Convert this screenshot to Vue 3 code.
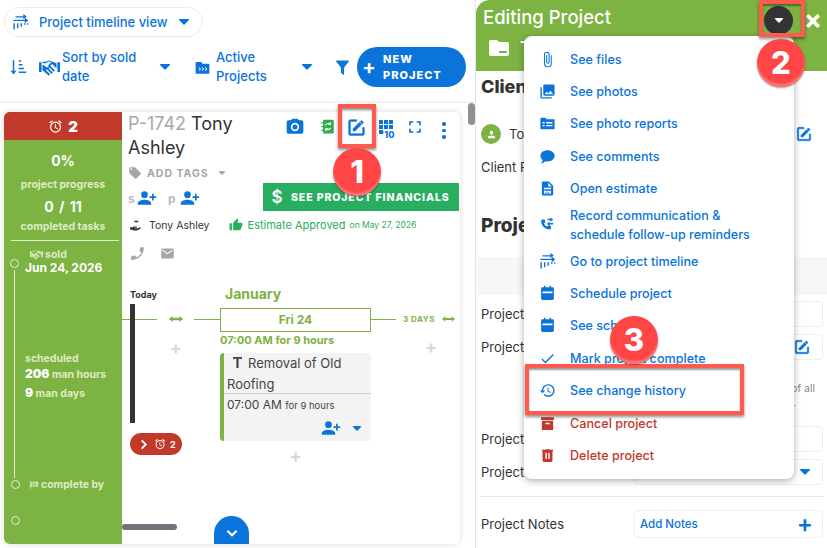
<script setup>
const i = {
  edit: 'M5 3C3.89 3 3 3.9 3 5V19C3 20.1 3.9 21 5 21H19C20.1 21 21 20.1 21 19V12H19V19H5V5H12V3H5M17.78 4C17.61 4 17.43 4.07 17.3 4.2L16.08 5.41L18.58 7.91L19.8 6.7C20.06 6.44 20.06 6 19.8 5.75L18.25 4.2C18.12 4.07 17.95 4 17.78 4M15.37 6.12L8 13.5V16H10.5L17.87 8.62L15.37 6.12Z',
  camera: 'M4,4H7L9,2H15L17,4H20A2,2 0 0,1 22,6V18A2,2 0 0,1 20,20H4A2,2 0 0,1 2,18V6A2,2 0 0,1 4,4M12,7A5,5 0 0,0 7,12A5,5 0 0,0 12,17A5,5 0 0,0 17,12A5,5 0 0,0 12,7M12,9A3,3 0 0,1 15,12A3,3 0 0,1 12,15A3,3 0 0,1 9,12A3,3 0 0,1 12,9Z',
  addUser: 'M9,14C11.67,14 17,15.33 17,18V20H1V18C1,15.33 6.33,14 9,14M18,10V7H20V10H23V12H20V15H18V12H15V10M9,12A4,4 0 0,1 5,8A4,4 0 0,1 9,4A4,4 0 0,1 13,8A4,4 0 0,1 9,12Z',
  tag: 'M5.5,7A1.5,1.5 0 0,1 4,5.5A1.5,1.5 0 0,1 5.5,4A1.5,1.5 0 0,1 7,5.5A1.5,1.5 0 0,1 5.5,7M21.41,11.58L12.41,2.58C12.05,2.22 11.55,2 11,2H4C2.89,2 2,2.89 2,4V11C2,11.55 2.22,12.05 2.59,12.41L11.58,21.41C11.95,21.77 12.45,22 13,22C13.55,22 14.05,21.77 14.41,21.41L21.41,14.41C21.78,14.05 22,13.55 22,13C22,12.44 21.77,11.94 21.41,11.58Z',
  phone: 'M17.38,10.79C15.94,13.62 13.62,15.94 10.79,17.38L8.59,15.18C8.31,14.9 7.92,14.82 7.57,14.93C6.45,15.3 5.25,15.5 4,15.5A1,1 0 0,0 3,16.5V20A1,1 0 0,0 4,21A17,17 0 0,0 21,4A1,1 0 0,0 20,3H16.5A1,1 0 0,0 15.5,4C15.5,5.25 15.3,6.45 14.93,7.57C14.82,7.92 14.9,8.31 15.18,8.59L17.38,10.79Z',
  email: 'M20,8L12,13L4,8V6L12,11L20,6M20,4H4C2.89,4 2,4.89 2,6V18A2,2 0 0,0 4,20H20A2,2 0 0,0 22,18V6C22,4.89 21.1,4 20,4Z',
  filter: 'M14,12V19.88C14.04,20.18 13.94,20.5 13.71,20.71C13.32,21.1 12.69,21.1 12.3,20.71L10.29,18.7C10.06,18.47 9.96,18.16 10,17.87V12H9.97L4.21,4.62C3.87,4.19 3.95,3.56 4.38,3.22C4.57,3.08 4.78,3 5,3H19C19.22,3 19.43,3.08 19.62,3.22C20.05,3.56 20.13,4.19 19.79,4.62L14.03,12H14Z',
  thumb: 'M23,10C23,8.89 22.1,8 21,8H14.68L15.64,3.43C15.66,3.33 15.67,3.22 15.67,3.11C15.67,2.7 15.5,2.32 15.23,2.05L14.17,1L7.59,7.58C7.22,7.95 7,8.45 7,9V19A2,2 0 0,0 9,21H18C18.83,21 19.54,20.5 19.84,19.78L22.86,12.73C22.95,12.5 23,12.26 23,12V10M1,21H5V9H1V21Z',
  alarm: 'M12,20A7,7 0 0,1 5,13A7,7 0 0,1 12,6A7,7 0 0,1 19,13A7,7 0 0,1 12,20M12,4A9,9 0 0,0 3,13A9,9 0 0,0 12,22A9,9 0 0,0 21,13A9,9 0 0,0 12,4M12.5,8H11V14L15.75,16.85L16.5,15.55L12.5,13.25V8M7.88,3.39L6.6,1.86L2,5.71L3.29,7.24L7.88,3.39M22,5.72L17.4,1.86L16.11,3.39L20.71,7.25L22,5.72Z',
  timeline: 'M2 13h2v9H2zM7 13h2v7H7zM12 13h2v5h-2zM17 13h2v2h-2zM21 13h2v2h-2zM2 8h16V5l5 4-5 4v-3H2zM5 3h11V0l5 3.5L16 7V5H5z',
  sort: 'M5 3h2v14h3l-4 5-4-5h3zM13 3h3v2h-3zM13 8h5v2h-5zM13 13h7v2h-7zM13 18h10v2H13z',
  shake: 'M0 6h3v11H0zM21 6h3v11h-3zM4 7h4l3-2 3 1-4 4 1.5 1.5L15 8l5 5v-6l-5-2-1 0-3-1-3 1.5H4zM4 9v6l7 6 2-1-5-5 1-1 5 5 2-1-5-5 1-1 5 5 1-2-6-6-3 3-4-3z',
  folderGo: 'M2 3h8l2 3h10a1 1 0 0 1 1 1v14a1 1 0 0 1-1 1H2a1 1 0 0 1-1-1V4a1 1 0 0 1 1-1z',
  clip: 'M16.5,6V17.5A4,4 0 0,1 12.5,21.5A4,4 0 0,1 8.5,17.5V5A2.5,2.5 0 0,1 11,2.5A2.5,2.5 0 0,1 13.5,5V15.5A1,1 0 0,1 12.5,16.5A1,1 0 0,1 11.5,15.5V6H10V15.5A2.5,2.5 0 0,0 12.5,18A2.5,2.5 0 0,0 15,15.5V5A4,4 0 0,0 11,1A4,4 0 0,0 7,5V17.5A5.5,5.5 0 0,0 12.5,23A5.5,5.5 0 0,0 18,17.5V6H16.5Z',
  photos: 'M22,16V4A2,2 0 0,0 20,2H8A2,2 0 0,0 6,4V16A2,2 0 0,0 8,18H20A2,2 0 0,0 22,16M11,12L13.03,14.71L16,11L20,16H8M2,6V20A2,2 0 0,0 4,22H18V20H4V6',
  report: 'M2 5a1 1 0 0 1 1-1h6l2 2h10a1 1 0 0 1 1 1v12a1 1 0 0 1-1 1H3a1 1 0 0 1-1-1zM5 10v2h3v-2zM10 10v2h9v-2zM5 14v2h3v-2zM10 14v2h9v-2z',
  comment: 'M12 3c5.5 0 10 3.4 10 8s-4.500 8-10 8c-1 0-2-.1-3-.4C7.500 20 5.500 21.500 3 22c1.200-1.500 2-3.200 2.200-5C3.200 15.500 2 13.400 2 11c0-4.600 4.500-8 10-8z',
  doc: 'M6,2H14L20,8V20A2,2 0 0,1 18,22H6C4.89,22 4,21.1 4,20V4C4,2.89 4.89,2 6,2M13,4V9H18L13,4M7,11V13H17V11H7M7,15V19H17V15H7M9,16.500H15V17.500H9Z',
  comm: 'M5 5h3l1 4-2 1.500c.9 2 2.500 3.600 4.500 4.500L13 13l4 1v3c0 1-1 2-2 2C8.500 19 3 13.500 3 7c0-1 1-2 2-2zM16 2l4 3-4 3V6h-4V4h4zM15 8l-4 3 4 3v-2h5v-2h-5z',
  calendar: 'M7 1h2v2h6V1h2v2h2a2 2 0 0 1 2 2v14a2 2 0 0 1-2 2H5a2 2 0 0 1-2-2V5a2 2 0 0 1 2-2h2zM5 9v2.500h14V9z',
  check: 'M21,7L9,19L3.5,13.5L4.91,12.09L9,16.17L19.59,5.59L21,7Z',
  history: 'M13.5,8H12V13L16.28,15.54L17,14.33L13.5,12.25V8M13,3A9,9 0 0,0 4,12H1L4.96,16.03L9,12H6A7,7 0 0,1 13,5A7,7 0 0,1 20,12A7,7 0 0,1 13,19C11.07,19 9.32,18.21 8.06,16.94L6.64,18.36C8.27,20 10.5,21 13,21A9,9 0 0,0 22,12A9,9 0 0,0 13,3',
  archive: 'M3,3H21V7H3V3M4,8H20V21H4V8M9.5,11A0.5,0.5 0 0,0 9,11.5V13H15V11.5A0.5,0.5 0 0,0 14.5,11H9.5Z',
  trash: 'M9,3V4H4V6H5V19A2,2 0 0,0 7,21H17A2,2 0 0,0 19,19V6H20V4H15V3H9M9,8H11V17H9V8M13,8H15V17H13V8Z',
  account: 'M12,4A4,4 0 0,1 16,8A4,4 0 0,1 12,12A4,4 0 0,1 8,8A4,4 0 0,1 12,4M12,14C16.42,14 20,15.79 20,18V20H4V18C4,15.79 7.58,14 12,14Z',
  folder: 'M10,4H4C2.89,4 2,4.89 2,6V18A2,2 0 0,0 4,20H20A2,2 0 0,0 22,18V8C22,6.89 21.1,6 20,6H12L10,4ZM12 15v2h8v-2z',
  full: 'M5,5H10V7H7V10H5V5M14,5H19V10H17V7H14V5M17,14H19V19H14V17H17V14M10,17V19H5V14H7V17H10Z',
  hammer: 'M4 2h16v4h-2V5h-4v17h-4V5H6v1H4z',
  hand: 'M10 3h7v3h-7zM2 15h4l3-1h5l1 2h-5v1h6l5-2 1 2-7 4H8l-2-1H2z',
  flag: 'M2 3h2v18H2zM5 4h17v12H5zM7 6v3h3V6zM13 6v3h3V6zM10 9v3h3V9zM16 9v3h3V9zM7 12v3h3v-3zM13 12v3h3v-3z',
  both: 'M0 6l6-5v3h12V1l6 5-6 5V8H6v3z'
}
const menu = [
  { label: 'See files', icon: i.clip },
  { label: 'See photos', icon: i.photos },
  { label: 'See photo reports', icon: i.report },
  { label: 'See comments', icon: i.comment },
  { label: 'Open estimate', icon: i.doc },
  { label: 'Record communication & schedule follow-up reminders', icon: i.comm, tall: true },
  { label: 'Go to project timeline', icon: i.timeline },
  { label: 'Schedule project', icon: i.calendar },
  { label: 'See schedule', icon: i.calendar },
  { label: 'Mark project complete', icon: i.check },
  { label: 'See change history', icon: i.history },
  { label: 'Cancel project', icon: i.archive, danger: true },
  { label: 'Delete project', icon: i.trash, danger: true }
]
</script>

<template>
  <div class="page">
    <section class="main">
      <div class="pill">
        <svg class="ic ic-timeline" viewBox="0 0 24 24"><path :d="i.timeline" /></svg>
        <span>Project timeline view</span>
        <i class="caret"></i>
      </div>

      <div class="toolbar">
        <svg class="ic ic-sort" viewBox="0 0 24 24"><path :d="i.sort" /></svg>
        <svg class="ic ic-shake" viewBox="0 0 24 24"><path :d="i.shake" /></svg>
        <span class="tb-label sort-label">Sort by sold date</span>
        <i class="caret caret-a"></i>
        <svg class="ic ic-go" viewBox="0 0 24 24"><path :d="i.folderGo" /><path class="go" d="M6 12l3 2.500-3 2.500M11 12l3 2.500-3 2.500M16 12l3 2.500-3 2.500" /></svg>
        <span class="tb-label active-label">Active Projects</span>
        <i class="caret caret-b"></i>
        <svg class="ic ic-filter" viewBox="0 0 24 24"><path :d="i.filter" /></svg>
        <button class="new-btn"><b class="plus">+</b><span>NEW PROJECT</span></button>
      </div>

      <div class="content">
        <article class="card">
          <aside class="side">
            <div class="side-alert">
              <svg class="ic ic-alarm" viewBox="0 0 24 24"><path :d="i.alarm" /></svg>
              <b>2</b>
            </div>
            <div class="side-pct">0%</div>
            <div class="side-cap cap-1">project progress</div>
            <div class="side-count">0 / 11</div>
            <div class="side-cap cap-2">completed tasks</div>
            <hr class="side-hr" />
            <div class="track">
              <i class="dot dot-1"></i>
              <div class="t-sold">
                <svg class="ic ic-mini" viewBox="0 0 24 24"><path :d="i.shake" /></svg> sold
              </div>
              <div class="t-date">Jun 24, 2026</div>
              <div class="t-sched">scheduled</div>
              <div class="t-hours"><b>206</b> man hours</div>
              <div class="t-days"><b>9</b> man days</div>
            </div>
            <div class="t-done">
              <i class="dot"></i>
              <svg class="ic ic-flag" viewBox="0 0 24 24"><path :d="i.flag" fill-rule="evenodd" /></svg>
              <span>complete by</span>
            </div>
            <i class="dot dot-last"></i>
          </aside>

          <div class="body">
            <header class="body-head">
              <h2 class="title"><span class="num">P-1742</span> Tony Ashley</h2>
              <div class="tools">
                <svg class="ic tool" viewBox="0 0 24 24"><path :d="i.camera" /></svg>
                <svg class="tool-note" viewBox="0 0 24 24"><path d="M5 1h15a2 2 0 0 1 2 2v18a2 2 0 0 1-2 2H5z" /><path d="M2 5h5v2H2zM2 11h5v2H2zM2 17h5v2H2z" /><path class="note-sync" d="M9 10a4.500 4.500 0 0 1 7-2M17 14a4.500 4.500 0 0 1-7 2M16.500 5v3.500H13M9.500 19v-3.500H13" /></svg>
                <svg class="ic tool tool-edit" viewBox="0 0 24 24"><path :d="i.edit" /></svg>
                <span class="tool-grid"><i v-for="n in 7" :key="n"></i><em>'10</em></span>
                <svg class="ic tool tool-full" viewBox="0 0 24 24"><path :d="i.full" /></svg>
                <span class="tool-dots"><i></i><i></i><i></i></span>
              </div>
            </header>
            <div class="tags">
              <svg class="ic ic-tag" viewBox="0 0 24 24"><path :d="i.tag" /></svg>
              <span>ADD TAGS</span>
              <i class="caret caret-grey"></i>
            </div>
            <div class="assign">
              <span class="letter">s</span>
              <svg class="ic ic-add" viewBox="0 0 24 24"><path :d="i.addUser" /></svg>
              <span class="letter letter-p">p</span>
              <svg class="ic ic-add" viewBox="0 0 24 24"><path :d="i.addUser" /></svg>
              <button class="fin"><b class="dollar">$</b><span>SEE PROJECT FINANCIALS</span></button>
            </div>
            <div class="owner">
              <svg class="ic ic-hand" viewBox="0 0 24 24"><path :d="i.hand" /></svg>
              <span class="owner-name">Tony Ashley</span>
              <svg class="ic ic-thumb" viewBox="0 0 24 24"><path :d="i.thumb" /></svg>
              <span class="approved">Estimate Approved</span>
              <span class="approved-on">on May 27, 2026</span>
            </div>
            <div class="contact">
              <svg class="ic ic-phone" viewBox="0 0 24 24"><path :d="i.phone" /></svg>
              <svg class="ic ic-mail" viewBox="0 0 24 24"><path :d="i.email" /></svg>
            </div>

            <div class="tl">
              <div class="tl-today">
                <span class="today">Today</span>
                <div class="today-lane">
                  <div class="tl-line">
                    <i class="seg seg-a"></i>
                    <svg class="ic arrow" viewBox="0 0 24 12"><path :d="i.both" /></svg>
                    <i class="seg seg-b"></i>
                  </div>
                  <b class="tl-plus plus-a">+</b>
                  <i class="today-bar"></i>
                </div>
                <div class="overdue">
                  <svg viewBox="0 0 24 24" class="chev"><path d="M8 3l9 9-9 9" /></svg>
                  <svg class="ic ic-alarm-s" viewBox="0 0 24 24"><path :d="i.alarm" /></svg>
                  <b>2</b>
                </div>
              </div>
              <div class="tl-day">
                <div class="month">January</div>
                <div class="daybox">Fri 24</div>
                <div class="daytime">07:00 AM for 9 hours</div>
                <div class="task">
                  <div class="task-title">
                    <svg class="ic ic-hammer" viewBox="0 0 24 24"><path :d="i.hammer" /></svg>
                    <span>Removal of Old Roofing</span>
                  </div>
                  <div class="task-time"><span>07:00 AM</span> <small>for 9 hours</small></div>
                  <div class="task-foot">
                    <svg class="ic ic-add" viewBox="0 0 24 24"><path :d="i.addUser" /></svg>
                    <i class="caret"></i>
                  </div>
                </div>
                <b class="tl-plus plus-b">+</b>
              </div>
              <div class="tl-gap">
                <div class="gap-line">
                  <i class="seg seg-c"></i>
                  <span class="gap-days">3 DAYS</span>
                  <svg class="ic arrow" viewBox="0 0 24 12"><path :d="i.both" /></svg>
                </div>
                <b class="tl-plus plus-c">+</b>
              </div>
            </div>
            <i class="hscroll"></i>
            <button class="more"><svg viewBox="0 0 24 24"><path d="M4 8l8 8 8-8" /></svg></button>
          </div>
        </article>
      </div>
      <i class="vscroll"></i>
    </section>

    <section class="panel">
      <header class="p-head">
        <div class="p-title">
          <h1>Editing Project</h1>
          <button class="p-more"><i class="caret caret-white"></i></button>
          <span class="p-close">×</span>
        </div>
        <div class="p-tabs">
          <svg class="ic ic-folder" viewBox="0 0 24 24"><path :d="i.folder" fill-rule="evenodd" /></svg>
          <b>T</b>
        </div>
      </header>
      <div class="p-body">
        <h3 class="p-h3">Client Details</h3>
        <div class="p-client">
          <span class="avatar"><svg viewBox="0 0 24 24"><path :d="i.account" /></svg></span>
          <span class="grow">Tony Ashley</span>
          <svg class="ic ic-edit" viewBox="0 0 24 24"><path :d="i.edit" /></svg>
        </div>
        <div class="p-line">Client Files</div>
        <h3 class="p-h2">Project Details</h3>
      </div>
      <div class="band"></div>
      <div class="p-form">
        <div class="row row-1"><label>Project Name</label><div class="field"></div></div>
        <div class="row row-2"><label>Project Scope</label><div class="field end"><svg class="ic ic-edit" viewBox="0 0 24 24"><path :d="i.edit" /></svg></div></div>
        <p class="note">Shown on the schedule of all<span>project views.</span></p>
        <div class="row row-3"><label>Project Type</label><div class="field"></div></div>
        <div class="row row-4"><label>Project Status</label><div class="field end"><i class="caret"></i></div></div>
        <hr class="p-hr" />
        <div class="row row-5"><label>Project Notes</label><div class="field notes"><span>Add Notes</span><b>+</b></div></div>
      </div>
    </section>

    <nav class="menu">
      <a v-for="m in menu" :key="m.label" class="item" :class="{ tall: m.tall, danger: m.danger }">
        <svg class="ic m-ic" viewBox="0 0 24 24"><path :d="m.icon" fill-rule="evenodd" /></svg>
        <span>{{ m.label }}</span>
      </a>
    </nav>

    <i class="mark mark-1"></i>
    <i class="mark mark-2"></i>
    <i class="mark mark-3"></i>
    <b class="badge badge-1">1</b>
    <b class="badge badge-2">2</b>
    <b class="badge badge-3">3</b>
  </div>
</template>

<style>
html, body { margin: 0; background: #fff; }
</style>

<style scoped>
* { box-sizing: border-box; }
.page {
  position: relative; display: flex; width: 827px; height: 548px; overflow: hidden;
  font-family: Inter, "Noto Sans", sans-serif; color: #333; background: #fff;
}
.ic { fill: currentColor; display: block; flex: none; }
i { display: block; font-style: normal; }
.caret { width: 0; height: 0; flex: none; border-left: 6px solid transparent; border-right: 6px solid transparent; border-top: 6px solid #0a74da; border-radius: 2px; }
button { border: 0; font-family: inherit; padding: 0; }

/* left */
.main { position: relative; width: 475px; flex: none; padding-top: 7px; color: #0a74da; }
.pill { margin-left: 4px; width: 199px; height: 30px; border: 1px solid #ececec; border-radius: 15px; display: flex; align-items: center; padding-left: 7px; font-size: 13px; font-weight: 500; }
.ic-timeline { width: 17px; height: 17px; margin-right: 10px; }
.pill .caret { margin-left: 10px; }
.toolbar { height: 40px; margin-top: 10px; display: flex; align-items: center; font-size: 13px; line-height: 19px; font-weight: 500; }
.ic-sort { width: 18px; height: 18px; margin-left: 9px; }
.ic-shake { width: 21px; height: 21px; margin-left: 12px; }
.tb-label { display: block; }
.sort-label { width: 92px; margin-left: 2px; }
.caret-a { margin-left: 5px; }
.ic-go { width: 15px; height: 15px; margin-left: 24px; }
.go { fill: none; stroke: #fff; stroke-width: 1.6; }
.active-label { width: 80px; margin-left: 6px; }
.caret-b { margin-left: 5px; }
.ic-filter { width: 19px; height: 19px; margin-left: 20px; }
.new-btn { width: 109px; height: 40px; margin-left: 5px; border-radius: 20px; background: #0a74da; color: #fff; display: flex; align-items: center; font-size: 11px; line-height: 16px; font-weight: 800; letter-spacing: 1px; text-align: left; }
.new-btn .plus { width: 14px; margin: 0 7px 0 5px; font-size: 20px; font-weight: 700; text-align: center; letter-spacing: 0; }
.new-btn span { width: 70px; }
.content { margin-top: 14px; height: 450px; padding: 9px 0 0 4px; border-top: 2px solid #f1f1f1; }
.card { position: relative; width: 456px; height: 432px; display: flex; border-radius: 6px; overflow: hidden; background: #fff; color: #333; box-shadow: 0 0 6px rgba(0,0,0,.14); }
.vscroll { position: absolute; left: 468px; top: 103px; width: 7px; height: 22px; border-radius: 4px; background: #8d9196; }

.side { width: 118px; flex: none; background: #7cb342; color: #fff; text-align: center; font-weight: 700; }
.side-alert { height: 28px; background: #c0392b; display: flex; align-items: center; justify-content: center; gap: 5px; font-size: 15px; }
.ic-alarm { width: 15px; height: 15px; }
.side-pct { margin-top: 12px; font-size: 14px; line-height: 18px; }
.side-cap { font-size: 10.5px; color: #dcecc4; line-height: 14px; }
.cap-1 { margin-top: 8px; }
.side-count { margin-top: 7px; font-size: 14px; line-height: 16px; word-spacing: 2px; }
.cap-2 { margin-top: 5px; }
.side-hr { margin: 6px 3px 0 7px; border: 0; border-top: 1px solid #e3efd2; }
.track { position: relative; margin: 7px 0 0 10px; height: 230px; text-align: left; padding-left: 11px; }
.track::before { content: ""; position: absolute; left: 0; top: 22px; bottom: 0; width: 1px; background: #dcecc4; }
.dot { width: 9px; height: 9px; border: 1px solid #e3efd2; border-radius: 50%; background: #7cb342; }
.dot-1 { position: absolute; left: -4px; top: 11px; }
.t-sold { display: flex; align-items: center; gap: 2px; margin-left: 5px; font-size: 10.5px; line-height: 13px; color: #dcecc4; }
.ic-mini { width: 13px; height: 13px; }
.t-date { font-size: 12px; line-height: 14px; margin-top: 0; white-space: nowrap; }
.t-sched { margin-top: 77px; font-size: 10.5px; line-height: 13px; color: #dcecc4; }
.t-hours, .t-days { font-size: 10.5px; color: #dcecc4; white-space: nowrap; }
.t-hours { margin-top: 1px; line-height: 15px; }
.t-days { margin-top: 3px; line-height: 15px; }
.t-hours b, .t-days b { color: #fff; font-size: 12px; }
.t-done { display: flex; align-items: center; margin-top: 0; padding-left: 7px; font-size: 10.5px; color: #dcecc4; }
.ic-flag { width: 10px; height: 10px; margin-left: 9px; margin-right: 2px; }
.dot-last { margin: 25px 0 0 7px; }

.body { position: relative; flex: 1; min-width: 0; }
.body-head { display: flex; height: 49px; padding-left: 6px; }
.title { margin: 0; width: 150px; font-size: 18px; line-height: 24px; font-weight: 400; }
.num { color: #a8a8a8; }
.tools { display: flex; align-items: flex-start; padding-top: 5px; margin-left: 7px; color: #0a74da; }
.tool { width: 20px; height: 20px; }
.tool-note { width: 15px; height: 15px; margin: 2px 0 0 15px; fill: #2fae4e; }
.note-sync { fill: none; stroke: #fff; stroke-width: 2; }
.tool-edit { margin-left: 11px; width: 21px; height: 21px; stroke: currentColor; stroke-width: .6; }
.tool-grid { position: relative; display: grid; grid-template-columns: repeat(3, 4px); grid-auto-rows: 4px; gap: 1px; width: 20px; margin: 3px 0 0 12px; }
.tool-grid i { width: 4px; height: 4px; background: #0a74da; }
.tool-grid em { position: absolute; left: 2px; top: 10px; font: 800 9px/10px Inter, sans-serif; }
.tool-full { margin-left: 6px; }
.tool-dots { display: flex; flex-direction: column; gap: 3px; margin: 5px 0 0 17px; }
.tool-dots i { width: 3.500px; height: 3.500px; border-radius: 50%; background: #0a74da; }
.tags { display: flex; align-items: center; height: 18px; margin-top: 3px; padding-left: 6px; color: #a6a6a6; font-size: 10.5px; font-weight: 700; letter-spacing: 1px; }
.ic-tag { width: 14px; height: 14px; margin-right: 5px; }
.caret-grey { border-left-width: 4px; border-right-width: 4px; border-top: 4px solid #a6a6a6; margin-left: 9px; }
.assign { display: flex; align-items: center; height: 28px; margin-top: 2px; padding-left: 6px; color: #bbb; font-size: 12px; font-weight: 700; }
.letter { width: 8px; }
.ic-add { width: 20px; height: 20px; color: #0a74da; }
.letter-p { margin-left: 11px; margin-right: 3px; }
.assign .ic-add { margin-left: 1px; }
.fin { width: 196px; height: 28px; margin: 0 0 2px 63px; background: #27ae60; color: #fff; display: flex; align-items: center; font-size: 10.5px; font-weight: 800; letter-spacing: .9px; white-space: nowrap; }
.dollar { width: 14px; margin: 0 7px 0 7px; font-size: 17px; font-weight: 600; letter-spacing: 0; }
.owner { display: flex; align-items: center; height: 18px; margin-top: 4px; padding-left: 7px; font-size: 10.5px; color: #333; white-space: nowrap; }
.ic-hand { width: 13px; height: 13px; }
.owner-name { margin-left: 7px; }
.ic-thumb { width: 14px; height: 14px; margin-left: 19px; color: #27ae60; }
.approved { margin-left: 5px; color: #27ae60; font-size: 11px; }
.approved-on { margin-left: 4px; color: #27ae60; font-size: 8.500px; }
.contact { display: flex; align-items: center; height: 20px; margin-top: 9px; padding-left: 7px; color: #a6a6a6; }
.ic-phone { width: 17px; height: 17px; }
.ic-mail { width: 15px; height: 15px; margin-left: 14px; }

.tl { display: flex; margin-top: 25px; }
.tl-today { width: 98px; flex: none; }
.today { display: block; padding-left: 8px; font-size: 9px; line-height: 14px; font-weight: 700; }
.today-lane { position: relative; height: 120px; margin-top: 2px; }
.today-bar { position: absolute; left: 8px; top: 0; width: 5px; height: 119px; background: #333; }
.tl-line { position: absolute; left: 0; right: 0; top: 14px; display: flex; align-items: center; height: 2px; }
.seg { height: 1px; background: #7cb342; }
.seg-a { width: 35px; }
.seg-b { width: 26px; }
.arrow { width: 14px; height: 8px; margin: 0 11.500px; color: #7cb342; }
.tl-plus { display: block; color: #d8d8d8; font-size: 18px; font-weight: 700; line-height: 18px; text-align: center; }
.plus-a { position: absolute; left: 35px; top: 35px; width: 37px; }
.overdue { width: 52px; height: 22px; margin: 9px 0 0 8px; border-radius: 11px; background: #c0392b; color: #fff; display: flex; align-items: center; padding-left: 8px; font-size: 9px; }
.chev { width: 11px; height: 11px; fill: none; stroke: #fff; stroke-width: 4; }
.ic-alarm-s { width: 12px; height: 12px; margin: 0 4px 0 5px; }
.tl-day { width: 151px; flex: none; }
.month { padding-left: 5px; height: 16px; color: #7cb342; font-size: 14px; line-height: 16px; font-weight: 700; margin-top: -2px; }
.daybox { height: 24px; border: 1px solid #7cb342; color: #7cb342; text-align: center; font-size: 12px; line-height: 22px; font-weight: 700; margin-top: 6px; }
.daytime { margin-top: 1px; color: #7cb342; font-size: 11px; line-height: 14px; font-weight: 700; white-space: nowrap; }
.task { margin-top: 6px; height: 88px; border-left: 4px solid #7cb342; border-radius: 4px; background: #f3f3f3; }
.task-title { position: relative; padding: 0 0 0 3px; font-size: 13px; line-height: 21px; border-bottom: 1px solid #d2d2d2; height: 41px; text-indent: 21px; color: #444; }
.task-title .ic-hammer { position: absolute; left: 7px; top: 3px; width: 13px; height: 13px; text-indent: 0; }
.task-title span { display: block; }
.task-time { padding: 3px 0 0 3px; font-size: 12px; line-height: 16px; color: #444; white-space: nowrap; }
.task-time small { font-size: 9.500px; }
.task-foot { display: flex; align-items: center; justify-content: flex-end; gap: 11px; padding: 4px 9px 0 0; }
.task-foot .caret { border-left-width: 5px; border-right-width: 5px; border-top-width: 5px; }
.plus-b { margin-top: 6px; }
.tl-gap { flex: 1; padding-top: 30px; }
.gap-line { display: flex; align-items: center; height: 2px; white-space: nowrap; }
.seg-c { width: 25px; }
.gap-days { margin-left: 7px; color: #7cb342; font-size: 8px; font-weight: 700; letter-spacing: .5px; }
.gap-line .arrow { width: 13px; margin: 0 0 0 7px; }
.plus-c { width: 120px; margin-top: 18px; }
.hscroll { position: absolute; left: 0; top: 412px; width: 55px; height: 6px; border-radius: 3px; background: #6f757b; }
.more { position: absolute; left: 92px; bottom: 0; width: 35px; height: 28px; border-radius: 18px 18px 0 0; background: #0a74da; }
.more svg { display: block; width: 14px; height: 14px; margin: 6px auto 0; fill: none; stroke: #fff; stroke-width: 3.500; }

/* panel */
.panel { width: 352px; flex: none; border-left: 1px solid #e5e5e5; background: #fff; }
.p-head { height: 71px; background: #7cb342; color: #fff; border-radius: 14px 0 0 0; padding: 6px 0 0 7px; }
.p-title { display: flex; align-items: center; height: 28px; }
.p-title h1 { flex: 1; margin: 0 0 7px; font-size: 18.500px; font-weight: 500; }
.p-more { width: 29px; height: 29px; border-radius: 50%; background: #333; display: flex; align-items: center; justify-content: center; }
.caret-white { border-left-width: 5px; border-right-width: 5px; border-top: 5px solid #fff; }
.p-close { width: 34px; text-align: center; font-size: 27px; line-height: 28px; font-weight: 700; padding-left: 6px; }
.p-tabs { display: flex; align-items: center; gap: 9px; margin-top: 2px; padding-left: 4px; font-size: 17px; }
.ic-folder { width: 24px; height: 24px; }
.p-body { padding-left: 5px; }
.p-h3 { margin: 5px 0 0; font-size: 18px; line-height: 22px; font-weight: 800; color: #333; }
.p-client { display: flex; align-items: center; height: 20px; margin-top: 26px; font-size: 13px; }
.avatar { width: 20px; height: 20px; border-radius: 50%; background: #7cb342; display: flex; align-items: center; justify-content: center; margin-right: 8px; }
.avatar svg { width: 11px; height: 11px; fill: #fff; }
.grow { flex: 1; }
.ic-edit { width: 18px; height: 18px; color: #0a74da; stroke: currentColor; stroke-width: .6; }
.p-client .ic-edit { margin-right: 14px; }
.p-line { margin-top: 14px; font-size: 13px; line-height: 18px; }
.p-h2 { margin: 38px 0 0; font-size: 19px; line-height: 24px; font-weight: 800; color: #333; }
.band { height: 38px; margin-top: 19px; background: #f7f7f7; }
.p-form { padding: 6px 4px 0 5px; }
.row { display: flex; align-items: center; justify-content: space-between; font-size: 13px; }
.row label { width: 153px; }
.field { width: 189px; height: 26px; border: 1px solid #eee; border-radius: 4px; display: flex; align-items: center; }
.end { justify-content: flex-end; padding-right: 11px; }
.row-2, .row-4 { margin-top: 7px; }
.note { margin: 22px 0 0; text-align: right; padding-right: 8px; font-size: 10.5px; line-height: 14px; color: #888; white-space: nowrap; height: 31px; }
.note span { display: block; padding-right: 19px; }
.row-3 { margin-top: 13px; }
.p-hr { margin: 11px 0 0; border: 0; border-top: 1px solid #e6e6e6; }
.notes { height: 28px; justify-content: space-between; padding: 0 9px 0 5px; color: #0a74da; font-size: 11.500px; font-weight: 500; }
.notes b { font-size: 24px; font-weight: 600; line-height: 22px; }
.row-5 { margin-top: 13px; }

/* menu */
.menu { position: absolute; left: 524px; top: 36px; width: 270px; height: 443px; padding-top: 7px; background: #fff; border-radius: 8px; box-shadow: 0 2px 7px rgba(0,0,0,.32); }
.item { display: flex; align-items: center; height: 32.400px; padding-left: 15px; color: #0a74da; font-size: 12.600px; line-height: 19px; font-weight: 500; }
.item.tall { height: 40px; }
.item.tall span { width: 190px; }
.danger { color: #c0392b; }
.m-ic { width: 17px; height: 17px; margin-right: 14px; }

/* annotations */
.mark { position: absolute; border: 4px solid #ff5a4d; box-shadow: 0 2px 3px rgba(0,0,0,.45), inset 0 2px 2px rgba(0,0,0,.4); }
.mark-1 { left: 338px; top: 104px; width: 38px; height: 44px; }
.mark-2 { left: 759px; top: 0; width: 46px; height: 37px; }
.mark-3 { left: 525px; top: 364px; width: 219px; height: 51px; }
.badge { position: absolute; width: 48px; height: 48px; border-radius: 50%; background: #ff4545; color: #fff; text-align: center; font: 800 31px/47px Inter, sans-serif; box-shadow: inset 0 -3px 2px rgba(255,255,255,.25), 0 1px 2px rgba(0,0,0,.4); }
.badge-1 { left: 333px; top: 148px; }
.badge-2 { left: 757px; top: 39px; }
.badge-3 { left: 610px; top: 316px; }
</style>
